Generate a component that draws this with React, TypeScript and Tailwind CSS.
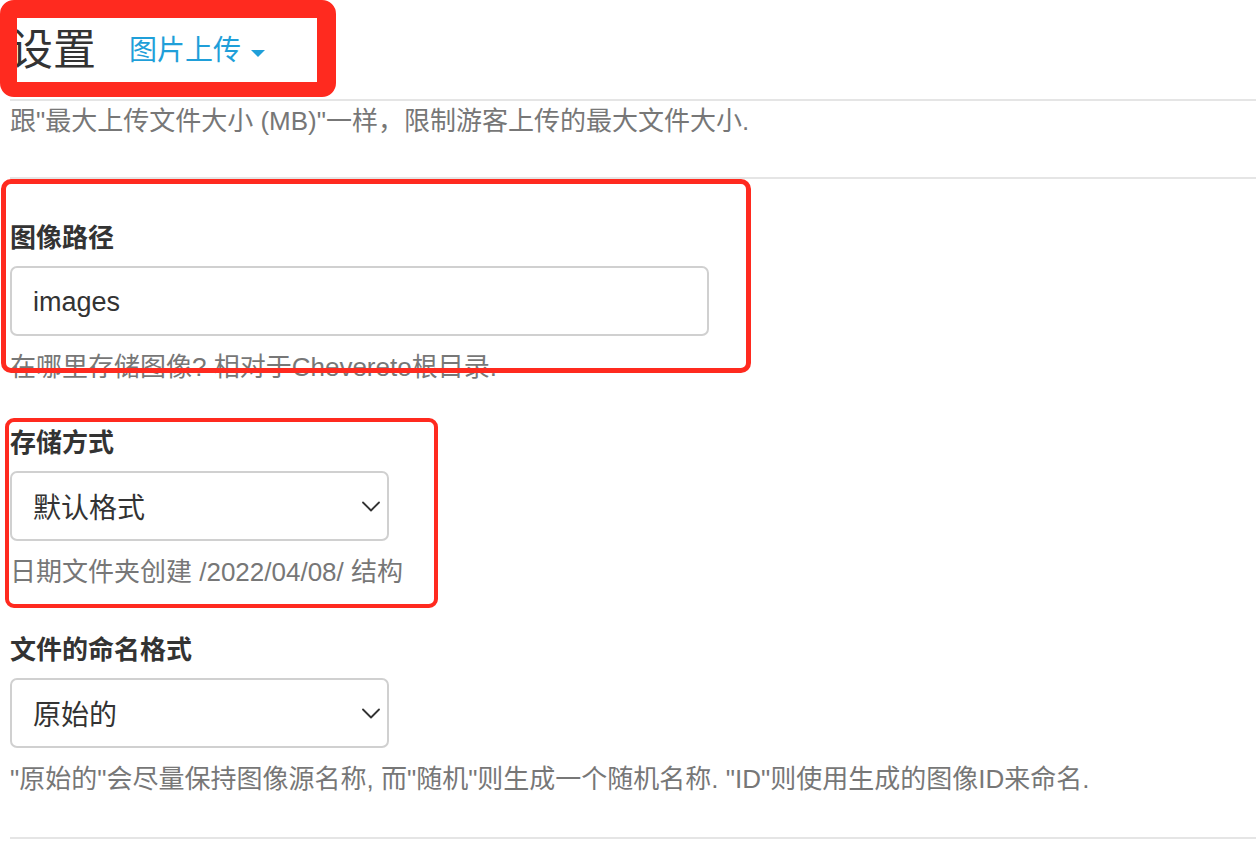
import { ReactNode } from 'react'

const font = {
  fontFamily: '"Liberation Sans", "Noto Sans CJK SC", sans-serif',
}

function Chevron() {
  return (
    <svg width="18" height="11" viewBox="0 0 18 11" fill="none">
      <polyline
        points="1,1.5 9,9.5 17,1.5"
        stroke="#333"
        strokeWidth="1.8"
        strokeLinecap="round"
        strokeLinejoin="round"
      />
    </svg>
  )
}

interface FieldProps {
  label: string
  help: ReactNode
  children: ReactNode
  className?: string
}

function Field({ label, help, children, className }: FieldProps) {
  return (
    <div className={`flex flex-col ${className ?? ''}`}>
      <label className="text-[26px] leading-[36px] font-bold text-[#333] mb-[10px]">
        {label}
      </label>
      {children}
      <p className="text-[26px] leading-[36px] text-[#777] mt-[13px]">{help}</p>
    </div>
  )
}

function SelectBox({ value }: { value: string }) {
  return (
    <div className="w-[379px] h-[70px] border-2 border-[#d0d0d0] rounded-[7px] flex items-center justify-between pl-[21px] pr-[7px]">
      <span className="text-[28px] text-[#333] pt-[5px]">{value}</span>
      <Chevron />
    </div>
  )
}

export default function App() {
  return (
    <div className="relative w-[1256px] h-[842px] bg-white overflow-hidden" style={font}>
      <div className="pl-[10px]">
        <div className="h-[99px] flex items-center">
          <h1 className="text-[43px] leading-none text-[#333] pt-[2px]">设置</h1>
          <div className="flex items-center ml-[33px] mt-[3px]">
            <span className="text-[28px] leading-none text-[#1f9fd9]">图片上传</span>
            <span className="ml-[10px] mt-[4px] w-0 h-0 border-l-[7px] border-r-[7px] border-t-[7px] border-l-transparent border-r-transparent border-t-[#1f9fd9]" />
          </div>
        </div>

        <div className="border-t-2 border-[#e5e5e5] h-[78px] pt-[2px]">
          <p className="text-[26px] leading-[36px] text-[#777]">
            跟"最大上传文件大小 (MB)"一样，限制游客上传的最大文件大小.
          </p>
        </div>

        <div className="border-t-2 border-[#e5e5e5] pt-[41px]">
          <Field label="图像路径" help="在哪里存储图像? 相对于Chevereto根目录.">
            <div className="w-[699px] h-[70px] border-2 border-[#d0d0d0] rounded-[7px] flex items-center pl-[21px]">
              <span className="text-[27px] text-[#333] pt-[3px]">images</span>
            </div>
          </Field>

          <Field
            className="mt-[40px]"
            label="存储方式"
            help="日期文件夹创建 /2022/04/08/ 结构"
          >
            <SelectBox value="默认格式" />
          </Field>

          <Field
            className="mt-[42px]"
            label="文件的命名格式"
            help={'"原始的"会尽量保持图像源名称, 而"随机"则生成一个随机名称. "ID"则使用生成的图像ID来命名.'}
          >
            <SelectBox value="原始的" />
          </Field>

          <div className="mt-[40px] border-t-2 border-[#e5e5e5]" />
        </div>
      </div>

      {/* red annotation frames */}
      <div className="absolute left-0 top-0 w-[336px] h-[97px] border-[#ff2a1f] border-l-[17px] border-r-[19px] border-t-[18px] border-b-[15px] rounded-[14px]" />
      <div className="absolute left-[1px] top-[179px] w-[750px] h-[194px] border-[5px] border-[#ff2a1f] rounded-[10px]" />
      <div className="absolute left-[5px] top-[418px] w-[433px] h-[190px] border-[4px] border-[#ff2a1f] rounded-[9px]" />
    </div>
  )
}
